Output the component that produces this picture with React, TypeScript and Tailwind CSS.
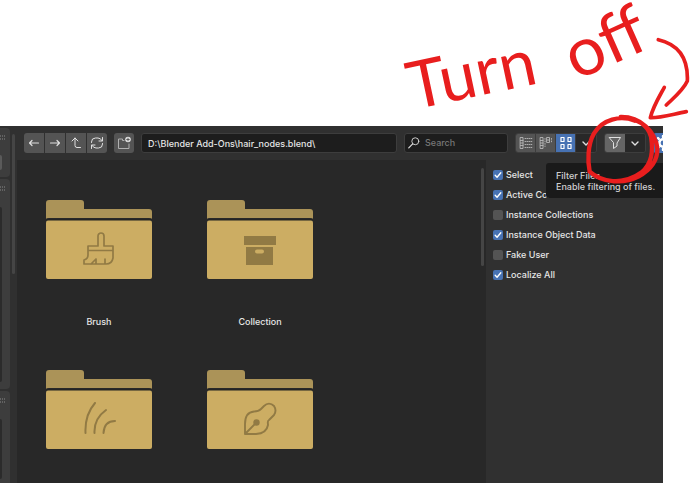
import { useState, type ReactNode } from 'react'

type IconProps = { children: ReactNode; className?: string }

function Icon({ children, className = 'size-4' }: IconProps) {
  return (
    <svg
      viewBox="0 0 16 16"
      fill="none"
      stroke="currentColor"
      strokeLinecap="round"
      strokeLinejoin="round"
      aria-hidden="true"
      className={className}
    >
      {children}
    </svg>
  )
}

const chevron = <path d="M5 7l3 3 3-3" strokeWidth="1.4" />

const navButtons = [
  { label: 'Back', icon: <path d="M12.500 8h-9M6 5.500L3.500 8 6 10.500" strokeWidth="1.2" /> },
  { label: 'Forward', icon: <path d="M3.500 8h9M10 5.500L12.500 8 10 10.500" strokeWidth="1.2" /> },
  { label: 'Parent directory', icon: <path d="M4 6l3-3 3 3M7 3v7.500q0 2 2 2h3.500" /> },
  {
    label: 'Refresh',
    icon: (
      <path d="M2.500 7.500V7a4 4 0 0 1 4-4h2.500q2 0 4 2.500M13.500 2.500v3.500h-3.500M13.500 8.500V9a4 4 0 0 1-4 4H7q-2 0-4-2.500M2.500 13.500V10H6" />
    ),
  },
]

const displayModes = [
  {
    label: 'Vertical list',
    icon: (
      <>
        <path
          d="M2.500 2.500h2.500v11H2.500zM2.500 5.500H5M2.500 8H5M2.500 10.500H5"
          strokeWidth="0.900"
          stroke="#b8b8b8"
        />
        <path
          d="M7 3.500h7M7 6.500h7M7 9.500h7M7 12.500h7"
          strokeWidth="0.900"
          strokeDasharray="0.800 1.200"
          stroke="#b8b8b8"
        />
      </>
    ),
  },
  {
    label: 'Horizontal list',
    icon: (
      <>
        <path
          d="M2.500 2.500H5v11H2.500zM2.500 5.500H5M2.500 8H5M2.500 10.500H5M9 2.500h2.500v5H9zM9 5h2.500"
          strokeWidth="0.900"
          stroke="#b8b8b8"
        />
        <path d="M7 3.500v8M13.500 3.500v4" strokeWidth="0.900" strokeDasharray="0.800 1.700" stroke="#b8b8b8" />
      </>
    ),
  },
  {
    label: 'Thumbnails',
    icon: <path d="M3 2.500h3v4H3zM10 2.500h3v4h-3zM3 9.500h3v4H3zM10 9.500h3v4h-3z" strokeWidth="1.2" />,
  },
]

const options = [
  { label: 'Select', checked: true },
  { label: 'Active Collection', checked: true },
  { label: 'Instance Collections', checked: false },
  { label: 'Instance Object Data', checked: true },
  { label: 'Fake User', checked: false },
  { label: 'Localize All', checked: true },
]

const folders = [
  {
    caption: 'Brush',
    icon: (
      <path
        d="M16 14V4a3 3 0 0 1 6 0v10h9v12q-1 6-7 6H2v-4q4-1 4-5v-9zM6 18.500h25M9 32l5-5v5M23 32v-5"
        strokeWidth="1.700"
      />
    ),
  },
  {
    caption: 'Collection',
    icon: (
      <path
        d="M1 4h32v9H1zM3 15h27v18H3zM14 17.500a2 2 0 0 0 0 4h5a2 2 0 0 0 0-4z"
        fill="currentColor"
        fillRule="evenodd"
        stroke="none"
      />
    ),
  },
  {
    icon: <path d="M3.500 31C3 20 6 9 13 1M12.500 31C12 21 17 13 24 8M21.500 31C22 23 26 19 33 19" strokeWidth="2" />,
  },
  {
    icon: (
      <>
        <path
          d="M2 32V22C2 15 5 10 11 9.500C15 9.500 16 9 18 7L21 4C24 1 28 1 31 4C33 7 33 10 31 13L26 18C24 19 25 21 25 23C24 29 20 31.500 13 32Z M2 32L13.500 20.500"
          strokeWidth="1.900"
        />
        <circle cx="13.500" cy="20.500" r="3.200" fill="currentColor" stroke="none" />
      </>
    ),
  },
]

function Folder({ caption, icon }: { caption?: string; icon: ReactNode }) {
  return (
    <figure className="flex flex-col items-center">
      <div className="relative">
        <svg viewBox="0 0 106 79" className="block h-[79px] w-[106px]" aria-hidden="true">
          <path d="M0 19V3q0-3 3-3h32q3 0 3 3v6h65q3 0 3 3v7q0-1-3-1H3q-3 0-3 1z" fill="#ab9358" />
          <path d="M1 20h104" stroke="#1e1e1e" strokeWidth="1" />
          <rect y="20.500" width="106" height="58.500" rx="2" fill="#ccad63" />
        </svg>
        <svg
          viewBox="0 0 36 36"
          fill="none"
          stroke="currentColor"
          strokeLinecap="round"
          strokeLinejoin="round"
          aria-hidden="true"
          className="absolute top-8 left-9 size-9 text-[#917a44]"
        >
          {icon}
        </svg>
      </div>
      {caption && <figcaption className="mt-9 leading-[14px] text-[#e6e6e6]">{caption}</figcaption>}
    </figure>
  )
}

function Option({ label, checked }: { label: string; checked: boolean }) {
  const [on, setOn] = useState(checked)
  return (
    <label className="flex h-5 items-center gap-[3px] whitespace-nowrap">
      <span className="grid size-[10px] place-items-center">
        <input
          type="checkbox"
          checked={on}
          onChange={() => setOn(!on)}
          className="col-start-1 row-start-1 size-[10px] appearance-none rounded-[2px] bg-[#545454] checked:bg-[#4772b3]"
        />
        {on && (
          <Icon className="pointer-events-none col-start-1 row-start-1 size-[10px] text-white">
            <path d="M3.500 8.500l3 3 6-7" strokeWidth="2.200" />
          </Icon>
        )}
      </span>
      {label}
    </label>
  )
}

function Grip() {
  return (
    <svg viewBox="0 0 5 5" className="size-[5px]" aria-hidden="true">
      <path d="M0 1h1M2 1h1M4 1h1M0 4h1M2 4h1M4 4h1" stroke="#8a8a8a" />
    </svg>
  )
}

function Sidebar() {
  return (
    <aside className="flex w-[17px] shrink-0 gap-[2px] pt-[2px]">
      <div className="flex w-[10px] flex-col gap-[2px]">
        <div className="h-[49px] rounded-r bg-[#3d3d3d] pt-[7px]">
          <Grip />
          <div className="mt-[15px] h-[15px] w-[2px] rounded-r bg-[#5a5a5a]" />
        </div>
        <div className="h-[210px] rounded-r bg-[#3d3d3d] pt-[7px]">
          <Grip />
          <div className="mt-4 h-[175px] w-[2px] rounded-r bg-[#2b2b2b]" />
        </div>
        <div className="flex grow flex-col rounded-tr bg-[#3d3d3d] pt-[7px]">
          <Grip />
          <div className="mt-4 mb-1 w-[2px] grow rounded-r bg-[#2b2b2b]" />
        </div>
      </div>
      <div className="mt-[6px] h-[140px] w-[3px] rounded-full bg-[#454545]" />
    </aside>
  )
}

function Toolbar() {
  return (
    <header className="flex h-[34px] shrink-0 items-center gap-[7px] overflow-hidden pl-[7px] text-[#e0e0e0]">
      <div className="flex shrink-0 gap-px overflow-hidden rounded-[3px]">
        {navButtons.map(({ label, icon }) => (
          <button key={label} type="button" aria-label={label} className="grid h-5 w-5 place-items-center bg-[#545454]">
            <Icon>{icon}</Icon>
          </button>
        ))}
      </div>
      <button type="button" aria-label="New folder" className="grid size-5 shrink-0 place-items-center rounded-[3px] bg-[#545454]">
        <Icon className="size-4 text-[#b0b0b0]">
          <path d="M8 5.500H6.500V4H2.500v9.500h10.500V9" />
          <circle cx="12" cy="4.500" r="2.800" fill="#e0e0e0" stroke="none" />
          <path d="M12 3.200v2.600M10.700 4.500h2.600" stroke="#545454" strokeWidth="0.900" />
        </Icon>
      </button>
      <input
        aria-label="File path"
        defaultValue={'D:\\Blender Add-Ons\\hair_nodes.blend\\'}
        className="h-5 min-w-0 grow rounded-[3px] border border-[#3d3d3d] bg-[#1d1d1d] px-[6px] text-[#e6e6e6] outline-none"
      />
      <label className="flex h-5 w-[104px] shrink-0 items-center gap-1 rounded-[3px] border border-[#3d3d3d] bg-[#1d1d1d] pl-[2px]">
        <Icon className="size-[14px] shrink-0">
          <circle cx="9.500" cy="6" r="4" />
          <path d="M6.500 9L2 13.500" strokeWidth="1.400" />
        </Icon>
        <input
          type="search"
          aria-label="Search files"
          placeholder="Search"
          className="w-full min-w-0 bg-transparent outline-none placeholder:text-[#777777]"
        />
      </label>
      <div className="flex shrink-0 overflow-hidden rounded-[3px] border border-[#3d3d3d]">
        {displayModes.map(({ label, icon }) => (
          <button
            key={label}
            type="button"
            aria-label={label}
            className="grid h-[18px] w-5 place-items-center border-r border-[#3d3d3d] bg-[#545454] nth-3:bg-[#4772b3] nth-3:text-white"
          >
            <Icon>{icon}</Icon>
          </button>
        ))}
        <button type="button" aria-label="Display settings" className="grid h-[18px] w-5 place-items-center bg-[#282828]">
          <Icon>{chevron}</Icon>
        </button>
      </div>
      <div className="flex shrink-0 overflow-hidden rounded-[3px] border border-[#3d3d3d]">
        <button type="button" aria-label="Filter files" className="grid h-[18px] w-5 place-items-center bg-[#656565]">
          <Icon>
            <path d="M2.500 2.500h11L10 8v3l-3.500 2.500V8z" />
          </Icon>
        </button>
        <button type="button" aria-label="Filter settings" className="grid h-[18px] w-5 place-items-center bg-[#282828]">
          <Icon>{chevron}</Icon>
        </button>
      </div>
      <button type="button" aria-label="Options" className="h-5 w-[10px] shrink-0 overflow-hidden rounded-l-[3px] bg-[#4772b3] pl-[2px]">
        <Icon className="size-4 text-white">
          <circle cx="8" cy="8" r="3.700" strokeWidth="2.600" />
          <path
            d="M8 2V1M8 15v-1M2 8H1M15 8h-1M3.800 3.800L3 3M13 13l-.8-.8M3.800 12.200L3 13M13 3l-.8.8"
            strokeWidth="2.400"
          />
        </Icon>
      </button>
    </header>
  )
}

function Annotation() {
  return (
    <div className="pointer-events-none absolute top-0 right-0 h-[190px] w-[300px] font-['Lato',sans-serif] font-normal text-[#e81e1e]">
      <p className="absolute top-8 left-4 -rotate-12 text-[66px] leading-[80px]">Turn</p>
      <p className="absolute top-0 left-[172px] -rotate-24 text-[68px] leading-[80px]">off</p>
      <svg
        viewBox="0 0 900 570"
        fill="none"
        stroke="currentColor"
        strokeWidth="11"
        strokeLinecap="round"
        strokeLinejoin="round"
        aria-hidden="true"
        className="absolute inset-0 size-full"
      >
        <path d="M805 119C865 133 895 175 892 243C880 270 855 290 829 315" />
        <path d="M823 262C806 293 789 320 781 353C812 354 850 342 889 335" />
        <path
          d="M735 362C690 345 638 358 612 400C592 435 593 485 599 515C635 548 700 553 745 530C790 505 803 475 802 445C796 395 752 350 692 351C742 355 774 375 783 410C790 455 786 490 755 517C730 536 700 544 670 544"
          strokeWidth="13"
        />
      </svg>
    </div>
  )
}

export default function App() {
  return (
    <div className="relative flex min-h-screen flex-col bg-white pt-[126px] pr-[27px] font-['Inter',sans-serif] text-[9px] font-medium">
      <main className="flex grow bg-[#303030]">
        <Sidebar />
        <div className="flex min-w-0 grow flex-col">
          <Toolbar />
          <div className="relative flex grow">
            <section className="flex min-w-0 grow justify-between bg-[#282828] pr-[2px] pl-[29px]">
              <div className="grid grid-cols-2 content-start gap-x-[55px] gap-y-[41px] pt-10">
                {folders.map((folder, index) => (
                  <Folder key={index} {...folder} />
                ))}
              </div>
              <div className="mt-2 h-[98px] w-[3px] rounded-full bg-[#454545]" />
            </section>
            <aside className="w-[177px] shrink-0 pt-[5px] pl-[7px] text-[#e6e6e6]">
              {options.map((option) => (
                <Option key={option.label} {...option} />
              ))}
            </aside>
            <div
              role="tooltip"
              className="absolute top-[3px] right-0 w-[117px] rounded-l-[3px] bg-[#1a1a1a] pt-[7px] pb-[6px] pl-[10px] leading-[11px] whitespace-nowrap text-[#d0d0d0]"
            >
              <p>Filter Files</p>
              <p>Enable filtering of files.</p>
            </div>
          </div>
        </div>
      </main>
      <Annotation />
    </div>
  )
}
